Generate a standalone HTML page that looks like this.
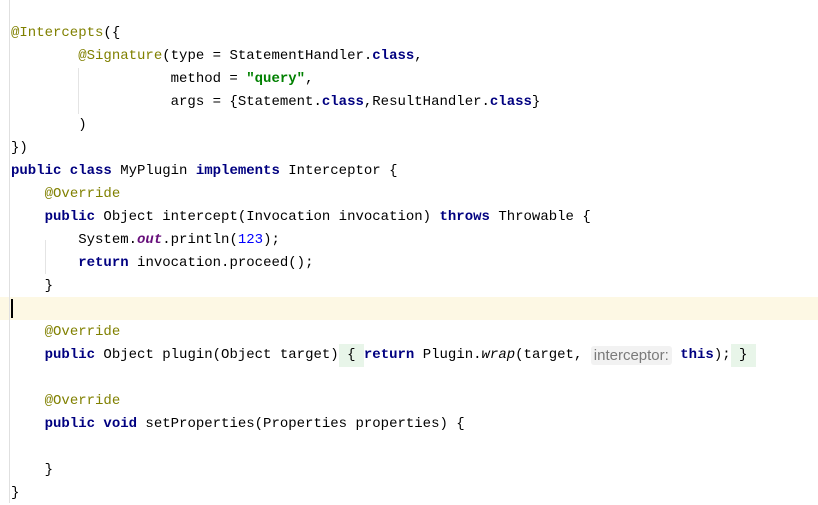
<!DOCTYPE html>
<html><head><style>
body{margin:0;width:818px;height:503px;background:#fff;overflow:hidden;position:relative;font-family:"Liberation Mono",monospace;font-size:14px;color:#000}
.l{position:absolute;left:11px;height:23px;line-height:23px;white-space:pre}
.k{color:#000080;font-weight:bold}
.a{color:#808000}
.s{color:#008000;font-weight:bold}
.n{color:#0000ff}
.f{color:#660e7a;font-weight:bold;font-style:italic}
.i{font-style:italic}
.hint{display:inline-block;height:19px;line-height:19px;vertical-align:top;margin-top:2px;background:#f2f2f2;color:#7a7a7a;font-family:"Liberation Sans",sans-serif;font-size:15px;border-radius:3px;padding:0 3px}
.br{display:inline-block;height:23px;background:#e8f5e9}
.g{position:absolute;width:1px;background:#e4e4e4}
</style></head><body>
<div style="position:absolute;left:0;top:297px;width:818px;height:23px;background:#fdf8e4"></div>
<div style="position:absolute;left:9px;top:0;width:1px;height:503px;background:#e0e0e0"></div>
<div class="g" style="left:78px;top:68px;height:46px"></div>
<div class="g" style="left:45px;top:240px;height:34px"></div>
<div style="position:absolute;left:11px;top:299px;width:2px;height:19px;background:#000"></div>
<div class="l" style="top:22px"><span class="a">@Intercepts</span>({</div>
<div class="l" style="top:45px">        <span class="a">@Signature</span>(type = StatementHandler.<span class="k">class</span>,</div>
<div class="l" style="top:68px">                   method = <span class="s">"query"</span>,</div>
<div class="l" style="top:91px">                   args = {Statement.<span class="k">class</span>,ResultHandler.<span class="k">class</span>}</div>
<div class="l" style="top:114px">        )</div>
<div class="l" style="top:137px">})</div>
<div class="l" style="top:160px"><span class="k">public class</span> MyPlugin <span class="k">implements</span> Interceptor {</div>
<div class="l" style="top:183px">    <span class="a">@Override</span></div>
<div class="l" style="top:206px">    <span class="k">public</span> Object intercept(Invocation invocation) <span class="k">throws</span> Throwable {</div>
<div class="l" style="top:229px">        System.<span class="f">out</span>.println(<span class="n">123</span>);</div>
<div class="l" style="top:252px">        <span class="k">return</span> invocation.proceed();</div>
<div class="l" style="top:275px">    }</div>
<div class="l" style="top:321px">    <span class="a">@Override</span></div>
<div class="l" style="top:344px">    <span class="k">public</span> Object plugin(Object target)<span class="br"> { </span><span class="k">return</span> Plugin.<span class="i">wrap</span>(target, <span class="hint">interceptor:</span> <span class="k">this</span>);<span class="br"> } </span></div>
<div class="l" style="top:390px">    <span class="a">@Override</span></div>
<div class="l" style="top:413px">    <span class="k">public void</span> setProperties(Properties properties) {</div>
<div class="l" style="top:459px">    }</div>
<div class="l" style="top:482px">}</div>
</body></html>
